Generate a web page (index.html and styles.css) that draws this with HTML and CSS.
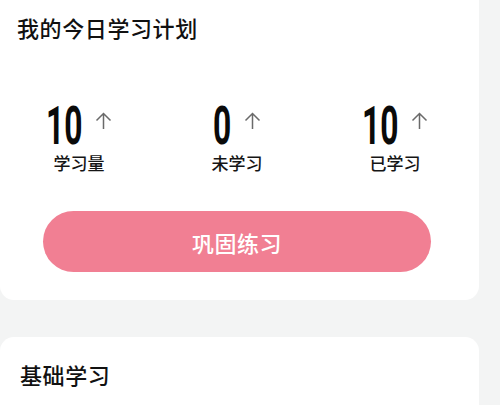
FILE: index.html
```html
<!DOCTYPE html>
<html lang="zh-CN">
<head>
<meta charset="utf-8">
<link rel="stylesheet" href="styles.css">
</head>
<body>
<div class="page">
  <section class="card plan">
    <h2 class="card-title">我的今日学习计划</h2>
    <div class="stats">
      <div class="stat">
        <div class="stat-top">
          <span class="num" style="--n:2"><span class="num-txt">10</span></span>
          <svg class="arrow" viewBox="0 0 17 17" width="17" height="17"><path d="M8.5 1.5V17M1.5 8.5L8.5 1.5L15.5 8.5" fill="none" stroke="#6a6a6a" stroke-width="1.5"/></svg>
        </div>
        <div class="stat-label">学习量</div>
      </div>
      <div class="stat">
        <div class="stat-top">
          <span class="num" style="--n:1"><span class="num-txt">0</span></span>
          <svg class="arrow" viewBox="0 0 17 17" width="17" height="17"><path d="M8.5 1.5V17M1.5 8.5L8.5 1.5L15.5 8.5" fill="none" stroke="#6a6a6a" stroke-width="1.5"/></svg>
        </div>
        <div class="stat-label">未学习</div>
      </div>
      <div class="stat">
        <div class="stat-top">
          <span class="num" style="--n:2"><span class="num-txt">10</span></span>
          <svg class="arrow" viewBox="0 0 17 17" width="17" height="17"><path d="M8.5 1.5V17M1.5 8.5L8.5 1.5L15.5 8.5" fill="none" stroke="#6a6a6a" stroke-width="1.5"/></svg>
        </div>
        <div class="stat-label">已学习</div>
      </div>
    </div>
    <button class="practice-btn">巩固练习</button>
  </section>
  <section class="card basic">
    <h2 class="card-title basic-title">基础学习</h2>
  </section>
</div>
</body>
</html>
```

FILE: styles.css
```css
* { box-sizing: border-box; }
html, body {
  margin: 0;
  padding: 0;
  background: #f3f4f4;
  font-family: "Noto Sans CJK SC", "Noto Sans", sans-serif;
  color: #111;
}
.page {
  width: 479px;
  display: flex;
  flex-direction: column;
  gap: 37px;
}
.card {
  background: #fff;
}
.plan {
  border-radius: 0 0 14px 14px;
  padding: 12px 0 28px;
}
.card-title {
  margin: 0;
  padding-left: 17px;
  font-size: 22px;
  line-height: 30px;
  font-weight: 500;
  letter-spacing: 0.6px;
}
.stats {
  margin-top: 64px;
  padding-right: 5px;
  display: grid;
  grid-template-columns: repeat(3, 1fr);
}
.stat {
  display: flex;
  flex-direction: column;
  align-items: center;
}
.stat-top {
  display: flex;
  align-items: flex-start;
  gap: 13px;
  height: 40px;
}
.num {
  display: inline-block;
  width: calc(var(--n) * 0.337em);
  height: 40px;
  font-family: Roboto, "Liberation Sans", sans-serif;
  font-weight: 700;
  font-size: 53px;
  line-height: 40px;
  color: #0a0a0a;
}
.num-txt {
  display: inline-block;
  white-space: nowrap;
  transform: scaleX(0.6);
  transform-origin: left center;
}
.arrow {
  margin-top: 6px;
  display: block;
}
.stat-label {
  margin-top: 5px;
  font-size: 17px;
  line-height: 24px;
  font-weight: 500;
  color: #151515;
}
.practice-btn {
  display: block;
  margin: 36px 0 0 43px;
  width: 388px;
  height: 61px;
  border: none;
  border-radius: 31px;
  background: #f17f93;
  color: #fff;
  font-family: "Noto Sans CJK SC", "Noto Sans", sans-serif;
  font-size: 22px;
  font-weight: 500;
  letter-spacing: 0.5px;
  padding: 0;
}
.basic {
  border-radius: 14px 14px 0 0;
  padding: 22px 0 40px;
}
.basic-title {
  padding-left: 20px;
}
```
